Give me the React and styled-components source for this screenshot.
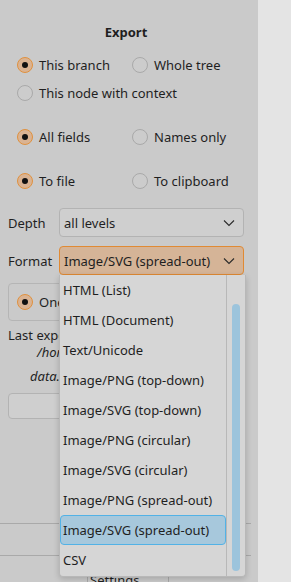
import React from "react";
import styled, { createGlobalStyle } from "styled-components";

const Global = createGlobalStyle`
  html, body { margin: 0; padding: 0; background: #e4e4e4; }
  body { font-family: "Noto Sans", "DejaVu Sans", sans-serif; font-size: 13px; color: #1f1f1f; }
`;

const Window = styled.div`
  position: relative;
  display: flex;
  width: 291px;
  height: 582px;
  overflow: hidden;
`;

const Panel = styled.div`
  width: 258px;
  background: #cacaca;
  display: flex;
  flex-direction: column;
  padding: 0 0 0 8px;
  box-sizing: border-box;
`;

const Side = styled.div`
  flex: 1;
  background: #e4e4e4;
`;

const Title = styled.div`
  font-weight: bold;
  text-align: center;
  width: 236px;
  margin-top: 23px;
  line-height: 18px;
`;

const RadioRow = styled.div`
  display: grid;
  grid-template-columns: 115px 1fr;
  height: 20px;
  align-items: center;
  margin-top: ${(p) => p.$gap}px;
`;

const RadioItem = styled.label`
  display: flex;
  align-items: center;
  gap: 6px;
  padding-left: 9px;
  white-space: nowrap;
`;

const Dot = styled.span`
  width: 16px;
  height: 16px;
  box-sizing: border-box;
  border-radius: 50%;
  border: 1px solid ${(p) => (p.$on ? "#e0913f" : "#a9a9a9")};
  background: ${(p) => (p.$on ? "#dab392" : "#cccccc")};
  display: flex;
  align-items: center;
  justify-content: center;
  flex-shrink: 0;
  &::after {
    content: "";
    display: ${(p) => (p.$on ? "block" : "none")};
    width: 6px;
    height: 6px;
    border-radius: 50%;
    background: #111;
  }
`;

function Radio({ on, children }) {
  return (
    <RadioItem>
      <Dot $on={on} />
      {children}
    </RadioItem>
  );
}

const FieldRow = styled.div`
  display: flex;
  align-items: center;
  margin-top: ${(p) => p.$gap}px;
`;

const FieldLabel = styled.div`
  width: 51px;
`;

const Combo = styled.div`
  width: 185px;
  height: 29px;
  box-sizing: border-box;
  border-radius: 4px;
  border: 1px solid ${(p) => (p.$active ? "#e08a34" : "#b3b3b3")};
  background: ${(p) => (p.$active ? "#d5b497" : "#cfcfcf")};
  display: flex;
  align-items: center;
  justify-content: space-between;
  padding: 0 8px 0 4px;
`;

const Chevron = () => (
  <svg width="12" height="8" viewBox="0 0 12 8">
    <path d="M1 1.5 L6 6.5 L11 1.5" fill="none" stroke="#2a2a2a" strokeWidth="1.1" />
  </svg>
);

const GroupBox = styled.div`
  margin-top: 8px;
  width: 237px;
  height: 38px;
  box-sizing: border-box;
  border: 1px solid #b5b5b5;
  border-radius: 4px;
  display: flex;
  align-items: center;
  & > label { padding-left: 8px; }
`;

const LastExport = styled.div`
  margin-top: 5px;
  line-height: 18px;
`;

const PathLine = styled.div`
  font-style: italic;
  line-height: 18px;
  margin-top: ${(p) => p.$gap}px;
  padding-left: ${(p) => p.$indent}px;
  white-space: nowrap;
`;

const Button = styled.div`
  margin-top: 8px;
  width: 237px;
  height: 26px;
  box-sizing: border-box;
  border: 1px solid #b3b3b3;
  border-radius: 4px;
  background: #cfcfcf;
`;

const Spacer = styled.div`
  flex: 1;
`;

const Rule = styled.div`
  height: 1px;
  width: 251px;
  margin-left: -8px;
  background: #a9a9a9;
  margin-bottom: ${(p) => p.$gap}px;
`;

const Tab = styled.div`
  margin-left: 79px;
  width: 78px;
  height: 10px;
  border-left: 1px solid #a9a9a9;
  border-right: 1px solid #a9a9a9;
  padding-left: 2px;
  line-height: 16px;
  overflow: visible;
`;

const Popup = styled.div`
  position: absolute;
  left: 59px;
  top: 275px;
  width: 187px;
  height: 302px;
  box-sizing: border-box;
  background: #d6d6d6;
  border: 1px solid #b8b8b8;
  border-top: none;
  border-radius: 0 0 4px 4px;
  box-shadow: 0 2px 6px rgba(0, 0, 0, 0.18);
  display: flex;
`;

const List = styled.div`
  width: 166px;
  display: flex;
  flex-direction: column;
`;

const Item = styled.div`
  height: 30px;
  box-sizing: border-box;
  display: flex;
  align-items: center;
  padding-left: 2px;
  white-space: nowrap;
  border-radius: 4px;
  border: 1px solid ${(p) => (p.$sel ? "#52b2e6" : "transparent")};
  background: ${(p) => (p.$sel ? "#a7c8dc" : "transparent")};
`;

const Track = styled.div`
  flex: 1;
  border-left: 1px solid #b8b8b8;
  display: flex;
  justify-content: center;
  padding: 29px 0 5px;
`;

const Thumb = styled.div`
  width: 8px;
  height: 100%;
  border-radius: 4px;
  background: #9cc4dc;
`;

const formats = [
  "HTML (List)",
  "HTML (Document)",
  "Text/Unicode",
  "Image/PNG (top-down)",
  "Image/SVG (top-down)",
  "Image/PNG (circular)",
  "Image/SVG (circular)",
  "Image/PNG (spread-out)",
  "Image/SVG (spread-out)",
  "CSV",
];

export default function App() {
  return (
    <Window>
      <Global />
      <Panel>
        <Title>Export</Title>
        <RadioRow $gap={14}>
          <Radio on>This branch</Radio>
          <Radio>Whole tree</Radio>
        </RadioRow>
        <RadioRow $gap={8}>
          <Radio>This node with context</Radio>
        </RadioRow>
        <RadioRow $gap={24}>
          <Radio on>All fields</Radio>
          <Radio>Names only</Radio>
        </RadioRow>
        <RadioRow $gap={24}>
          <Radio on>To file</Radio>
          <Radio>To clipboard</Radio>
        </RadioRow>
        <FieldRow $gap={17}>
          <FieldLabel>Depth</FieldLabel>
          <Combo>
            all levels
            <Chevron />
          </Combo>
        </FieldRow>
        <FieldRow $gap={9}>
          <FieldLabel>Format</FieldLabel>
          <Combo $active>
            Image/SVG (spread-out)
            <Chevron />
          </Combo>
        </FieldRow>
        <GroupBox>
          <Radio on>One file</Radio>
        </GroupBox>
        <LastExport>Last export:</LastExport>
        <PathLine $gap={-1} $indent={29}>/home/user/export/</PathLine>
        <PathLine $gap={6} $indent={22}>data.svg</PathLine>
        <Button />
        <Spacer />
        <Rule $gap={31} />
        <Rule $gap={16} />
        <Tab>Settings</Tab>
      </Panel>
      <Side />
      <Popup>
        <List>
          {formats.map((f) => (
            <Item key={f} $sel={f === "Image/SVG (spread-out)"}>
              {f}
            </Item>
          ))}
        </List>
        <Track>
          <Thumb />
        </Track>
      </Popup>
    </Window>
  );
}
